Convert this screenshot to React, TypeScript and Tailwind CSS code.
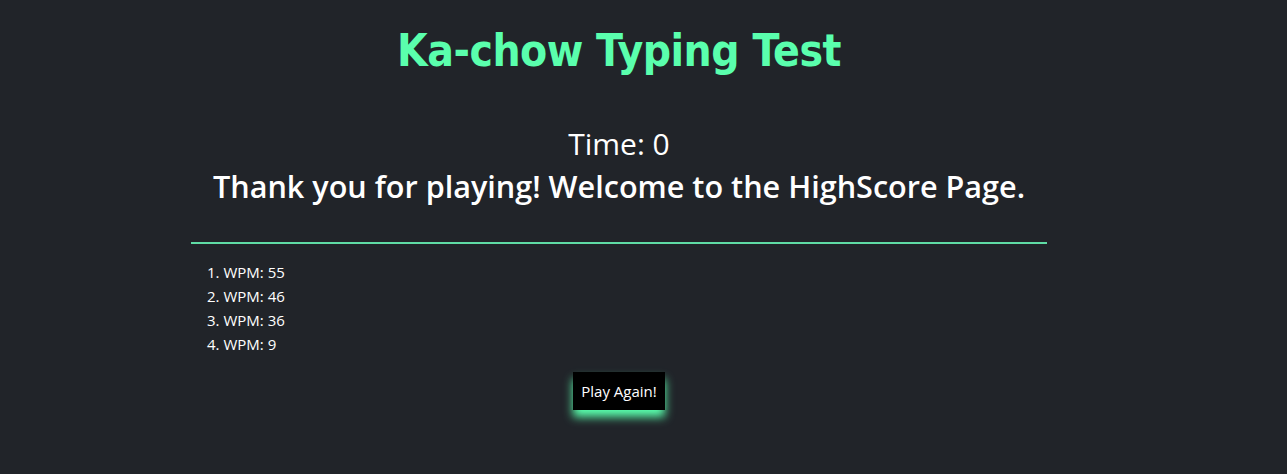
export default function App() {
  const scores = [55, 46, 36, 9];

  return (
    <div className="min-h-[474px] w-full bg-[#212429] font-['Open_Sans','Noto_Sans',sans-serif]">
      <div className="ml-[191px] w-[856px] flex flex-col items-center pt-[24px]">
        {/* タイトル */}
        <h1 className="font-['DejaVu_Sans_Condensed','DejaVu_Sans',sans-serif] font-bold text-[44px] leading-[54px] text-[#5affad] tracking-[-0.5px]">
          Ka-chow Typing Test
        </h1>

        <div className="mt-[46px] text-[30px] leading-[40px] text-white">
          Time: 0
        </div>
        <h2 className="mt-[2px] text-[30.6px] leading-[40px] font-semibold text-white">
          Thank you for playing! Welcome to the HighScore Page.
        </h2>

        <hr className="mt-[36px] w-full border-0 h-[2px] bg-[#5fdca5]" />

        {/* スコア一覧 */}
        <ol className="self-start mt-[16px] pl-[16px] list-none text-[15px] leading-[24px] text-white">
          {scores.map((wpm, i) => (
            <li key={i}>
              {i + 1}. WPM: {wpm}
            </li>
          ))}
        </ol>

        <button
          type="button"
          className="mt-[16px] bg-black text-white text-[15px] px-[8px] h-[38px] shadow-[0_7px_9px_rgba(90,255,173,1)]"
        >
          Play Again!
        </button>
      </div>
    </div>
  );
}
